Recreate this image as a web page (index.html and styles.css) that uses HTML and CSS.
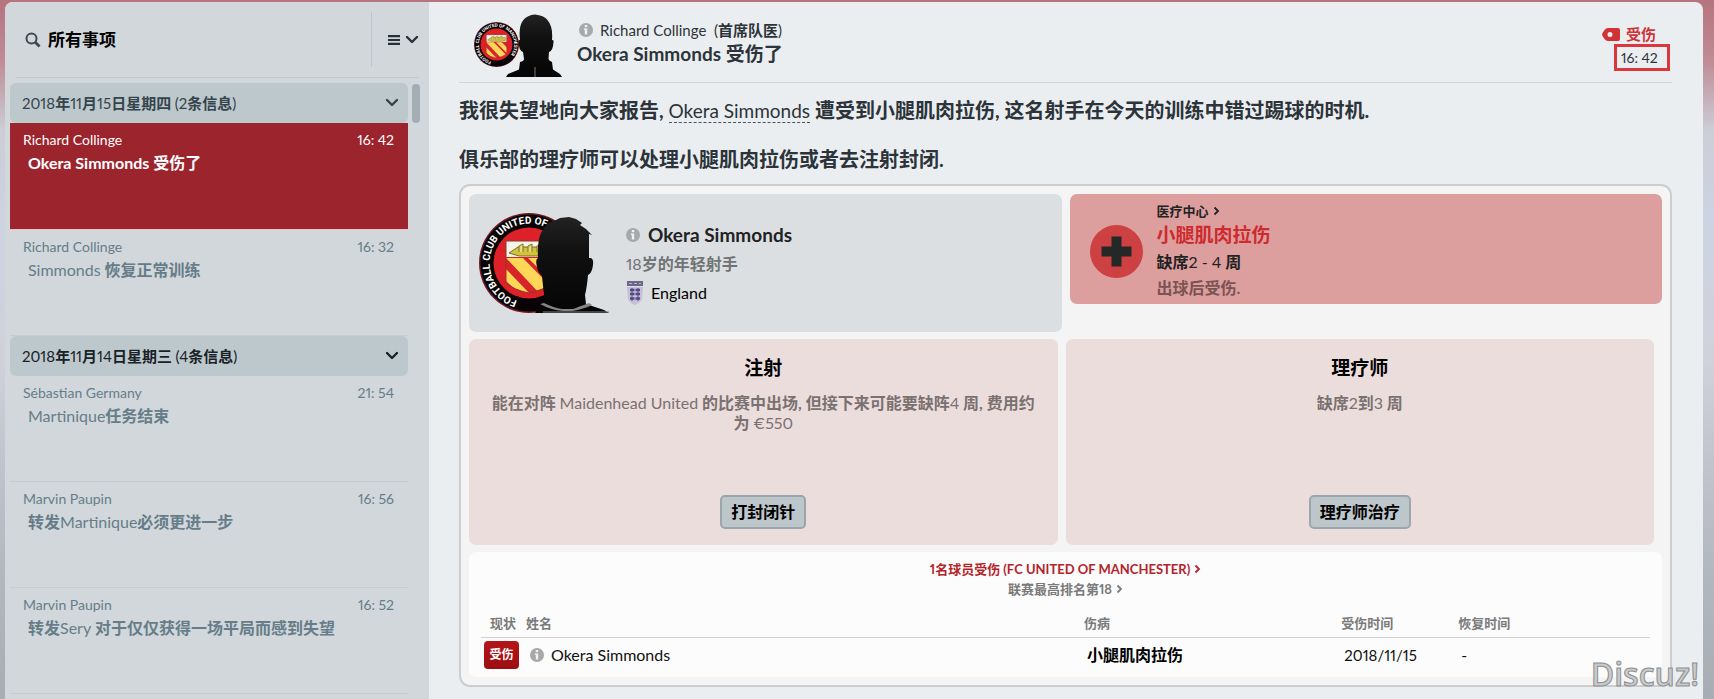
FILE: index.html
```html
<!DOCTYPE html>
<html lang="zh-CN">
<head>
<meta charset="utf-8">
<meta name="viewport" content="width=device-width, initial-scale=1">
<title>所有事项</title>
<link rel="stylesheet" href="styles.css">
</head>
<body>
<svg class="defs" aria-hidden="true">
  <defs>
    <linearGradient id="skin" x1="0" y1="0" x2="0" y2="1"><stop offset="0" stop-color="#222"/><stop offset=".35" stop-color="#111"/><stop offset="1" stop-color="#050505"/></linearGradient>
    <clipPath id="shield"><path d="M27 28H73V70Q65 77 50 80Q35 77 27 70Z"/></clipPath>
    <path id="arc-text" d="M38.300 87.500A39.300 39.300 0 1 1 61.700 87.500"/>
    <symbol id="chevron" viewBox="0 0 14 10"><path d="M2 2L7 7L12 2" fill="none" stroke="currentColor" stroke-width="2.400" stroke-linecap="round" stroke-linejoin="round"/></symbol>
    <symbol id="arrow" viewBox="0 0 7 10"><path d="M1.500 1.500L5 5L1.500 8.500" fill="none" stroke="currentColor" stroke-width="1.800"/></symbol>
    <symbol id="info" viewBox="0 0 14 14"><circle cx="7" cy="7" r="7" fill="#a6a8a9"/><rect x="5.800" y="2" width="2.400" height="2.200" fill="#f1f1f1"/><path d="M4.900 5.500H8.200V11.500H5.800V7H4.900Z" fill="#f1f1f1"/></symbol>
    <symbol id="crest" viewBox="0 0 100 100">
      <circle cx="50" cy="50" r="50" fill="#6d1a25"/>
      <circle cx="50" cy="50" r="48.500" fill="#080405"/>
      <circle cx="50" cy="50" r="35.500" fill="#de2029"/>
      <g clip-path="url(#shield)">
        <rect x="27" y="28" width="46" height="52" fill="#d8232a"/>
        <path d="M27 45L44 45L78 80L62 82ZM49 45H62L80 64V76ZM27 56V68L42 82L52 82Z" fill="#ffd758"/>
        <rect x="27" y="28" width="46" height="16" fill="#f6f3ea"/>
        <path d="M30 40L39 34H70V41L60 43H40Z" fill="#d2c33a" stroke="#77702b" stroke-width="1"/>
        <path d="M40 39V33L44 31V39M49 39V33L53 31V39M58 39V33L62 31V39" fill="#e8db72" stroke="#77702b" stroke-width="1"/>
      </g>
      <path d="M27 28H73V70Q65 77 50 80Q35 77 27 70Z" fill="none" stroke="#8b3a2a" stroke-width="1"/>
      <text class="crest-text"><textPath href="#arc-text">FOOTBALL CLUB UNITED OF MANCHESTER</textPath></text>
    </symbol>
  </defs>
</svg>

<div class="frame">
  <aside class="sidebar">
    <header class="side-head">
      <svg class="search" viewBox="0 0 16 16" aria-hidden="true"><circle cx="6.500" cy="6.500" r="5" fill="none" stroke="#3f4a50" stroke-width="2"/><path d="M10.300 10.300L14.500 14.500" stroke="#3f4a50" stroke-width="2.800"/></svg>
      <h2>所有事项</h2>
      <button class="menu" aria-label="菜单">
        <svg class="bars" viewBox="0 0 12 10" aria-hidden="true"><path d="M0 1.200H12M0 5H12M0 8.800H12" stroke="currentColor" stroke-width="2.200"/></svg>
        <svg class="chev"><use href="#chevron"/></svg>
      </button>
    </header>
    <div class="side-body">
      <div class="list">
        <button class="group"><span><span class="lt">2018</span>年<span class="lt">11</span>月<span class="lt">15</span>日星期四 <span class="lt">(2</span>条信息<span class="lt">)</span></span><svg class="chev"><use href="#chevron"/></svg></button>
        <a class="item selected" href="#m1"><span class="meta"><span>Richard Collinge</span><time>16: 42</time></span><span class="subject">Okera Simmonds 受伤了</span></a>
        <a class="item" href="#m2"><span class="meta"><span>Richard Collinge</span><time>16: 32</time></span><span class="subject"><span class="lt">Simmonds</span> 恢复正常训练</span></a>
        <button class="group dark"><span><span class="lt">2018</span>年<span class="lt">11</span>月<span class="lt">14</span>日星期三 <span class="lt">(4</span>条信息<span class="lt">)</span></span><svg class="chev"><use href="#chevron"/></svg></button>
        <a class="item" href="#m3"><span class="meta"><span>Sébastian Germany</span><time>21: 54</time></span><span class="subject"><span class="lt">Martinique</span>任务结束</span></a>
        <a class="item" href="#m4"><span class="meta"><span>Marvin Paupin</span><time>16: 56</time></span><span class="subject">转发<span class="lt">Martinique</span>必须更进一步</span></a>
        <a class="item" href="#m5"><span class="meta"><span>Marvin Paupin</span><time>16: 52</time></span><span class="subject">转发<span class="lt">Sery</span> 对于仅仅获得一场平局而感到失望</span></a>
      </div>
      <div class="scrollbar"></div>
    </div>
  </aside>

  <main class="message">
    <header class="msg-head">
      <svg class="avatar-small" viewBox="0 0 90 63" aria-hidden="true">
        <use href="#crest" x="0" y="8" width="45" height="45"/>
        <path d="M32 63L34 60L45 55.500L46 48Q50 47 50 45L49 38Q45 37 44.500 28Q44 26 46 26Q43 2 61 .500Q80 2 78 26Q80 26 79.500 28Q79 37 75 38L74.500 45Q75 47 78 48L79 55.500L86 60L88 63Z" fill="url(#skin)"/>
        <path d="M61 53V63" stroke="#777" stroke-width="1"/>
      </svg>
      <div class="who">
        <p class="sender"><svg class="info"><use href="#info"/></svg><span><span class="lt">Richard Collinge&nbsp; (</span>首席队医<span class="lt">)</span></span></p>
        <h1>Okera Simmonds 受伤了</h1>
      </div>
      <div class="status">
        <p class="tag"><svg viewBox="0 0 18 13" aria-hidden="true"><path fill-rule="evenodd" d="M6 0H16Q18 0 18 2V11Q18 13 16 13H6Q4 13 2.500 11L.500 8Q-.300 6.500 .500 5L2.500 2Q4 0 6 0ZM8 4A2.500 2.500 0 1 0 8 9A2.500 2.500 0 1 0 8 4Z" fill="#cf3338"/></svg>受伤</p>
        <time class="boxed">16: 42</time>
      </div>
    </header>

    <div class="copy">
      <p>我很失望地向大家报告, <a class="lt" href="#player">Okera Simmonds</a> 遭受到小腿肌肉拉伤, 这名射手在今天的训练中错过踢球的时机.</p>
      <p>俱乐部的理疗师可以处理小腿肌肉拉伤或者去注射封闭.</p>
    </div>

    <section class="panel">
      <div class="row top">
        <article class="card player">
          <svg class="avatar" viewBox="0 0 130 100" aria-hidden="true">
            <use href="#crest" x="0" y="0" width="100" height="100"/>
            <path d="M56 100L62 91L66 87Q64 76 63 63Q59 60 58 54Q56 46 59 45Q58 29 62 20Q67 9 77 7L81 5L90 4L97 6L103 10L101 12L107 16L113 22L110 21V45Q115 44 114 52Q113 60 109 62Q108 74 106 82L107 91L116 94L125 97L130 100Z" fill="url(#skin)"/>
            <path d="M61 91Q72 97 84 98H93Q105 96 113 92L110 90Q99 94 94 96H83Q75 95 65 90Z" fill="#858585"/>
            <path d="M64 99H130" stroke="#858585" stroke-width="1"/>
          </svg>
          <div class="bio">
            <h3><svg class="info"><use href="#info"/></svg>Okera Simmonds</h3>
            <p class="role"><span class="lt">18</span>岁的年轻射手</p>
            <p class="nation"><svg viewBox="0 0 18 24" aria-hidden="true"><rect x="1" y="0" width="16" height="5" fill="#6d6688"/><path d="M3 2.500H6M8 2.500H11M13 2.500H15" stroke="#b9b6ca" stroke-width="1"/><path d="M1 6H17L16 18Q14 22 9 24Q4 22 2 18Z" fill="#c5c0d8"/><path d="M4 9H14M4 13H14M4 17.500H14" stroke="#554a82" stroke-width="2.400" stroke-dasharray="4.500 1"/><path d="M6 7V20M12 7V20" stroke="#554a82" stroke-width="1"/></svg><span class="lt">England</span></p>
          </div>
        </article>
        <article class="card injury">
          <svg class="cross" viewBox="0 0 53 53" aria-hidden="true"><circle cx="26.500" cy="26.500" r="26.500" fill="#cd4143"/><path d="M21.500 11.500H31.500V21.500H41.500V31.500H31.500V41.500H21.500V31.500H11.500V21.500H21.500Z" fill="#242928"/></svg>
          <div>
            <a class="centre" href="#medical">医疗中心<svg class="arrow"><use href="#arrow"/></svg></a>
            <h3>小腿肌肉拉伤</h3>
            <p class="absence">缺席<span class="lt">2 - 4</span> 周</p>
            <p class="cause">出球后受伤.</p>
          </div>
        </article>
      </div>
      <div class="row options">
        <article class="card option">
          <h3>注射</h3>
          <p>能在对阵 <span class="lt">Maidenhead United</span> 的比赛中出场, 但接下来可能要缺阵<span class="lt">4</span> 周, 费用约为 <span class="lt">€550</span></p>
          <button>打封闭针</button>
        </article>
        <article class="card option">
          <h3>理疗师</h3>
          <p>缺席<span class="lt">2</span>到<span class="lt">3</span> 周</p>
          <button>理疗师治疗</button>
        </article>
      </div>
      <div class="card report">
        <a class="club" href="#club">1名球员受伤 (FC UNITED OF MANCHESTER)<svg class="arrow"><use href="#arrow"/></svg></a>
        <a class="rank" href="#rank">联赛最高排名第18<svg class="arrow"><use href="#arrow"/></svg></a>
        <table>
          <thead><tr><th class="c-state">现状</th><th class="c-name">姓名</th><th class="c-injury">伤病</th><th class="c-date">受伤时间</th><th>恢复时间</th></tr></thead>
          <tbody><tr><td><span class="badge">受伤</span></td><td><span class="name"><svg class="info"><use href="#info"/></svg>Okera Simmonds</span></td><td class="strong">小腿肌肉拉伤</td><td class="date">2018/11/15</td><td>-</td></tr></tbody>
        </table>
      </div>
    </section>
  </main>
</div>
<div class="watermark">Discuz!</div>
</body>
</html>
```

FILE: styles.css
```css
* { box-sizing: border-box; }
body, h1, h2, h3, p { margin: 0; }
body {
  min-height: 100vh;
  display: flex;
  padding: 2px 11px 0 5px;
  font-family: Lato, "Noto Sans CJK SC", sans-serif;
  font-size: 16px;
  line-height: 20px;
  font-weight: 700;
  font-variant-numeric: proportional-nums;
  color: #2c343a;
  background: linear-gradient(180deg, #b5747e 0, #bf8b94 60px, #cccdd6 130px, #cdd3e2 220px, #d0d1da 360px, #b4b8bf 560px, #a8adb4 100%);
}
h1, h2, h3 { font-weight: 700; }
a { color: inherit; text-decoration: none; }
button { font: inherit; color: inherit; border: 0; background: none; padding: 0; }
svg { display: block; flex: none; }
.lt { font-weight: 400; }
.defs { position: absolute; width: 0; height: 0; }
.crest-text { font: 700 10px Roboto, sans-serif; fill: #fff; }
.chev { width: 14px; height: 10px; }
.info { width: 14px; height: 14px; }
.arrow { width: 7px; height: 10px; }

.frame {
  flex: 1;
  display: grid;
  grid-template-columns: 424px minmax(0, 1fr);
  border-radius: 8px 8px 0 0;
  background: #ebeef1;
  overflow: hidden;
}

.sidebar { background: #d1d7db; padding: 0 9px 0 5px; }
.side-head {
  display: flex;
  align-items: center;
  height: 76px;
  margin: 0 1px 0 6px;
  padding-left: 9px;
  border-bottom: 1px solid #c0c8cc;
  color: #000;
}
.search { width: 16px; height: 16px; }
.side-head h2 { flex: 1; margin-left: 7px; font-size: 17px; }
.menu {
  display: flex;
  align-items: center;
  gap: 5px;
  height: 55px;
  padding-left: 16px;
  border-left: 1px solid #bdc6ca;
  color: #263238;
}
.bars { width: 12px; height: 10px; }
.side-body { display: flex; gap: 4px; padding-top: 5px; }
.list { flex: 1; display: flex; flex-direction: column; }
.scrollbar { width: 8px; height: 39px; margin-top: 1px; border-radius: 4px; background: #a3adb4; }
.group {
  display: flex;
  align-items: center;
  justify-content: space-between;
  height: 40px;
  padding: 0 9px 0 12px;
  border-radius: 6px;
  background: #bdc8cd;
  color: #35444c;
  font-size: 15px;
}
.group.dark { color: #182227; }
.item {
  display: block;
  height: 106px;
  padding: 7px 14px 0 13px;
  border-bottom: 1px solid #c5cdd1;
  color: #667d89;
}
.item.selected { height: 107px; background: #9c242d; color: #fff; border-color: #eebfc4; }
.meta { display: flex; justify-content: space-between; font-size: 14px; font-weight: 400; }
.subject { display: block; margin-top: 3px; padding-left: 5px; }

.message { padding: 0 31px 8px 30px; display: flex; flex-direction: column; }
.msg-head {
  display: flex;
  height: 81px;
  padding: 12px 0 0 15px;
  border-bottom: 1px solid #d2d6d9;
}
.avatar-small { width: 90px; height: 63px; }
.who { flex: 1; margin: 6px 0 0 13px; }
.sender { display: flex; align-items: center; gap: 7px; padding-left: 2px; font-size: 15px; }
.who h1 { margin-top: 1px; font-size: 19px; line-height: 26px; }
.status { display: flex; flex-direction: column; align-items: flex-end; padding: 11px 2px 0 0; }
.tag { display: flex; align-items: center; gap: 6px; margin-right: 14px; font-size: 15px; line-height: 19px; color: #cf3338; }
.tag svg { width: 18px; height: 13px; }
.boxed {
  width: 56px;
  height: 27px;
  padding-left: 4px;
  border: 3px solid #d9383d;
  font-size: 14px;
  line-height: 21px;
  font-weight: 400;
}
.copy { padding-top: 13px; font-size: 20px; line-height: 28px; }
.copy p { margin-bottom: 20px; }
.copy a { border-bottom: 1px dashed #4b5358; font-size: 19px; }

.panel {
  margin-top: -9px;
  display: flex;
  flex-direction: column;
  gap: 7px;
  padding: 8px;
  border: 2px solid #cbced0;
  border-radius: 11px;
  background: #f4f4f4;
}
.card { border-radius: 7px; }
.row { display: grid; grid-template-columns: 1fr 1fr; gap: 8px; align-items: start; }
.options { padding-right: 8px; }
.player { display: flex; height: 138px; padding: 19px 10px; background: #dcdfe2; color: #222; }
.avatar { width: 130px; height: 100px; }
.bio { margin: 9px 0 0 17px; }
.bio h3 { display: flex; align-items: center; gap: 8px; font-size: 19px; line-height: 26px; }
.role { margin-top: 6px; color: #707475; }
.nation { display: flex; align-items: center; gap: 7px; margin-top: 7px; color: #000; }
.nation svg { width: 18px; height: 24px; }
.injury { display: flex; height: 110px; padding: 7px 20px; gap: 14px; background: #dd9e9e; color: #222; }
.cross { width: 53px; height: 53px; margin-top: 24px; }
.centre { display: flex; align-items: center; gap: 4px; font-size: 13px; }
.injury h3 { font-size: 19px; line-height: 28px; color: #cd2b2f; }
.absence { line-height: 26px; }
.cause { line-height: 26px; color: #7a5353; }
.option {
  display: flex;
  flex-direction: column;
  align-items: center;
  height: 206px;
  padding: 15px 16px 16px;
  background: #ecdddd;
  text-align: center;
}
.option h3 { font-size: 19px; line-height: 28px; color: #000; }
.option p { margin-top: 11px; line-height: 20px; color: #7a7170; }
.option button {
  height: 34px;
  margin-top: auto;
  padding: 0 9px;
  border: 2px solid #9aa6ac;
  border-radius: 5px;
  background: #bdc6ca;
  color: #000;
}
.report {
  display: flex;
  flex-direction: column;
  align-items: center;
  height: 125px;
  padding: 7px 12px 0;
  background: #fcfcfc;
  font-size: 13px;
}
.report > a { display: flex; align-items: center; gap: 4px; }
.club { color: #b3242b; }
.rank { color: #7a7a7a; }
.report table { width: 100%; margin-top: 12px; border-collapse: collapse; table-layout: fixed; color: #222; }
.report th { height: 26px; padding: 0 0 2px; border-bottom: 1px solid #d2d2d2; text-align: left; color: #7a7a7a; }
.report th.c-state { width: 42px; padding-left: 9px; }
.report th.c-name { width: 48%; padding-left: 3px; }
.report th.c-injury { width: 22%; }
.report th.c-date { width: 10%; }
.report td { height: 35px; padding: 0 0 0 3px; font-size: 16px; font-weight: 400; color: #111; }
.badge {
  display: block;
  width: 35px;
  height: 28px;
  border-radius: 4px;
  background: linear-gradient(#b41619, #9d0e11);
  color: #fff;
  font-size: 12px;
  font-weight: 700;
  line-height: 28px;
  text-align: center;
}
.name { display: flex; align-items: center; gap: 7px; padding-left: 4px; }
.report td.strong { font-weight: 700; color: #000; }
.report td.date { font-size: 15px; }
.watermark {
  position: absolute;
  right: 15px;
  bottom: 5px;
  font-family: "Open Sans", sans-serif;
  font-size: 32px;
  line-height: 40px;
  font-weight: 600;
  color: #c9cacb;
  -webkit-text-stroke: 1px #8d8f91;
}
```
